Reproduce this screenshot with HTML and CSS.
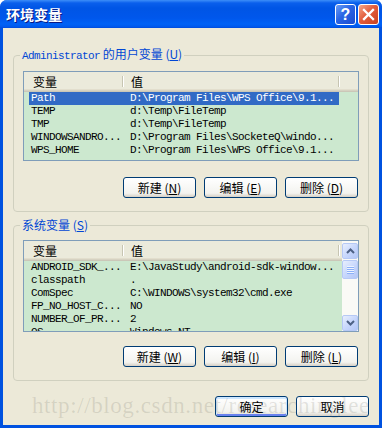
FILE: index.html
```html
<!DOCTYPE html>
<html lang="zh-CN">
<head>
    <meta charset="UTF-8">
    <meta name="viewport" content="width=device-width, initial-scale=1.0">
    <title>环境变量</title>
    <link rel="stylesheet" href="styles.css">
</head>
<body>
    <div class="window">
        <div class="titlebar">
            <span class="title">环境变量</span>
            <div class="caption-btns">
                <div class="cap-btn help">?</div>
                <div class="cap-btn close">
                    <svg width="13" height="13" viewBox="0 0 13 13">
                        <path d="M2 2 L11 11 M11 2 L2 11" stroke="#fff" stroke-width="2.3" stroke-linecap="square"/>
                    </svg>
                </div>
            </div>
        </div>

        <div class="client">
            <fieldset class="group">
                <legend><span class="mono">Administrator</span> 的用户变量 (<u>U</u>)</legend>
                <div class="list">
                    <div class="list-main">
                        <div class="header">
                            <div class="hcol c1">变量</div>
                            <div class="hcol c2">值</div>
                        </div>
                        <div class="row sel"><span class="c1">Path</span><span class="c2">D:\Program Files\WPS Office\9.1...</span></div>
                        <div class="row"><span class="c1">TEMP</span><span class="c2">d:\Temp\FileTemp</span></div>
                        <div class="row"><span class="c1">TMP</span><span class="c2">d:\Temp\FileTemp</span></div>
                        <div class="row"><span class="c1">WINDOWSANDRO...</span><span class="c2">D:\Program Files\SocketeQ\windo...</span></div>
                        <div class="row"><span class="c1">WPS_HOME</span><span class="c2">D:\Program Files\WPS Office\9.1...</span></div>
                    </div>
                </div>
                <div class="btn-row">
                    <button class="btn">新建 (<u>N</u>)</button>
                    <button class="btn">编辑 (<u>E</u>)</button>
                    <button class="btn">删除 (<u>D</u>)</button>
                </div>
            </fieldset>

            <fieldset class="group second">
                <legend>系统变量 (<u>S</u>)</legend>
                <div class="list tall">
                    <div class="list-main">
                        <div class="header">
                            <div class="hcol c1">变量</div>
                            <div class="hcol c2">值</div>
                        </div>
                        <div class="row"><span class="c1">ANDROID_SDK_...</span><span class="c2">E:\JavaStudy\android-sdk-window...</span></div>
                        <div class="row"><span class="c1">classpath</span><span class="c2">.</span></div>
                        <div class="row"><span class="c1">ComSpec</span><span class="c2">C:\WINDOWS\system32\cmd.exe</span></div>
                        <div class="row"><span class="c1">FP_NO_HOST_C...</span><span class="c2">NO</span></div>
                        <div class="row"><span class="c1">NUMBER_OF_PR...</span><span class="c2">2</span></div>
                        <div class="row"><span class="c1">OS</span><span class="c2">Windows_NT</span></div>
                    </div>
                    <div class="scrollbar">
                        <div class="sb-btn">
                            <svg width="9" height="6" viewBox="0 0 9 6"><path d="M1 5 L4.5 1.5 L8 5" fill="none" stroke="#4D6185" stroke-width="2"/></svg>
                        </div>
                        <div class="sb-track">
                            <div class="sb-thumb"><span class="grip"></span></div>
                        </div>
                        <div class="sb-btn">
                            <svg width="9" height="6" viewBox="0 0 9 6"><path d="M1 1 L4.5 4.5 L8 1" fill="none" stroke="#4D6185" stroke-width="2"/></svg>
                        </div>
                    </div>
                </div>
                <div class="btn-row">
                    <button class="btn">新建 (<u>W</u>)</button>
                    <button class="btn">编辑 (<u>I</u>)</button>
                    <button class="btn">删除 (<u>L</u>)</button>
                </div>
            </fieldset>

            <div class="footer">
                <button class="btn default">确定</button>
                <button class="btn">取消</button>
            </div>
        </div>

        <div class="watermark">http://blog.csdn.net/researchinglee</div>
    </div>
</body>
</html>
```

FILE: styles.css
```css
* {
    box-sizing: border-box;
}
body {
    margin: 0;
    background: #fff;
    font-family: "Noto Sans CJK SC", sans-serif;
    font-size: 12px;
    color: #000;
}
.window {
    position: relative;
    width: 382px;
    height: 428px;
    background: #0052E0;
    border-radius: 7px 7px 0 0;
    display: flex;
    flex-direction: column;
    overflow: hidden;
}
.titlebar {
    height: 28px;
    flex: none;
    display: flex;
    align-items: center;
    justify-content: space-between;
    padding: 0 3px 0 6px;
    background: linear-gradient(to bottom, #3D8EF8 0, #0A5FEC 3px, #0055E5 8px, #0057EC 18px, #0062F6 24px, #0058EC 27px, #0048D8 28px);
}
.title {
    color: #fff;
    font-weight: bold;
    font-size: 14px;
    line-height: 28px;
    text-shadow: 1px 1px #0A1883;
}
.caption-btns {
    display: flex;
    gap: 2px;
}
.cap-btn {
    width: 21px;
    height: 21px;
    border: 1px solid #fff;
    border-radius: 3px;
    display: flex;
    align-items: center;
    justify-content: center;
}
.help {
    background: linear-gradient(135deg, #6A9CF6, #2A64E4 45%, #1A4CD0);
    color: #fff;
    font: bold 16px/19px "Liberation Sans", sans-serif;
}
.close {
    background: linear-gradient(135deg, #F5A88A, #E25D3D 45%, #C9421F);
}

.client {
    flex: 1;
    margin: 0 3px 3px;
    background: #ECE9D8;
    padding: 19px 10px 0;
}
.group {
    margin: 0;
    min-width: 0;
    border: 1px solid #D0D0BF;
    border-radius: 4px;
    padding: 8px 9px 13px 9px;
}
.group.second {
    margin-top: 6px;
}
.group legend {
    padding: 0 2px;
    margin-left: -3px;
    color: #0046D5;
    line-height: 14px;
}
.mono {
    font-family: "Liberation Mono", monospace;
    font-size: 11px;
    letter-spacing: -0.6px;
}

.list {
    height: 90px;
    border: 1px solid #7F9DB9;
    background: #CCE8CF;
    display: flex;
    overflow: hidden;
}
.list.tall {
    height: 92px;
}
.list-main {
    flex: 1;
    min-width: 0;
}
.header {
    display: flex;
    height: 20px;
    background: #EBEADB;
    box-shadow: inset 0 -1px #CBC7B8, inset 0 -2px #D6D2C2, inset 0 -3px #E2DECD;
}
.hcol {
    position: relative;
    line-height: 20px;
    padding-left: 9px;
}
.hcol.c1 {
    width: 99px;
}
.hcol.c2 {
    width: 216px;
    padding-left: 8px;
}
.hcol::after {
    content: "";
    position: absolute;
    right: 0;
    top: 4px;
    bottom: 5px;
    width: 1px;
    background: #C7C5B2;
    box-shadow: 1px 0 #fff;
}
.row {
    display: flex;
    margin-left: 5px;
    width: 310px;
    height: 13px;
    font: 11px/13px "Liberation Mono", monospace;
    letter-spacing: -0.6px;
    white-space: nowrap;
}
.row .c1 {
    width: 94px;
    padding-left: 2px;
    overflow: hidden;
}
.row .c2 {
    width: 216px;
    padding-left: 7px;
    overflow: hidden;
}
.row.sel {
    background: #316AC5;
    color: #fff;
}

.scrollbar {
    width: 16px;
    flex: none;
    display: flex;
    flex-direction: column;
    background: #FAFAF6;
    padding-top: 2px;
}
.sb-btn,
.sb-thumb {
    border: 1px solid #B6C9F5;
    border-radius: 2px;
    background: linear-gradient(135deg, #E8EFFD, #C6D6FC 55%, #B4C7F6);
    display: flex;
    align-items: center;
    justify-content: center;
}
.sb-btn {
    height: 16px;
    flex: none;
}
.sb-track {
    flex: 1;
    padding-top: 1px;
}
.sb-thumb {
    height: 19px;
}
.grip {
    width: 7px;
    height: 8px;
    background: repeating-linear-gradient(to bottom, #EEF4FE 0, #EEF4FE 1px, #8CB0F8 1px, #8CB0F8 2px);
}

.btn-row {
    display: flex;
    justify-content: flex-end;
    gap: 8px;
    margin-top: 16px;
    padding-right: 1px;
}
.second .btn-row {
    margin-top: 14px;
}
.btn {
    width: 73px;
    height: 21px;
    padding: 0;
    border: 1px solid #003C74;
    border-radius: 3px;
    background: linear-gradient(to bottom, #FFFFFF, #F3F3EF 80%, #D6D0C5);
    font: 12px/19px "Noto Sans CJK SC", sans-serif;
    color: #000;
}
.btn.default {
    box-shadow: inset 0 1px 0 1px #CEE7FF, inset 0 -1px 0 1px #6982EE;
}
.footer {
    display: flex;
    justify-content: flex-end;
    gap: 8px;
    margin-top: 15px;
}

.watermark {
    position: absolute;
    left: 32px;
    top: 395px;
    font: 23px/22px "Liberation Serif", serif;
    letter-spacing: 0.6px;
    color: rgba(90, 90, 80, 0.16);
    white-space: nowrap;
    pointer-events: none;
}
```
